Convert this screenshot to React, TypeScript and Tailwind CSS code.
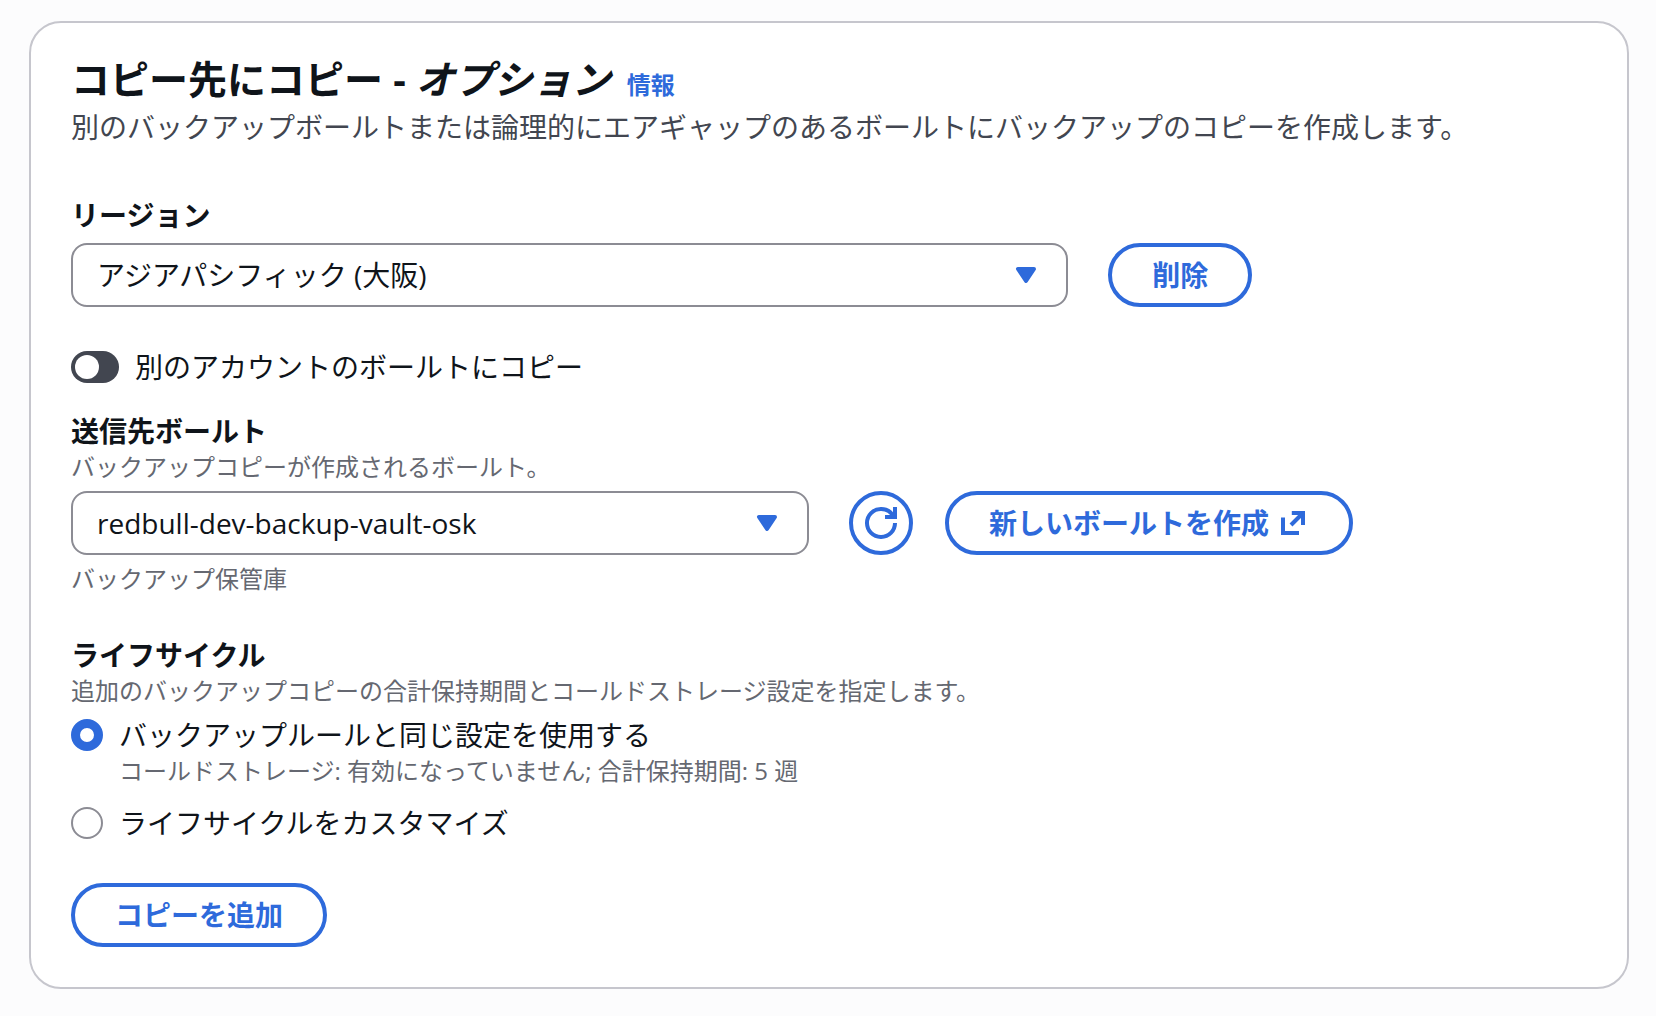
import { useId, useState, type ReactNode } from 'react';

const buttonClass =
  'flex h-16 shrink-0 items-center justify-center rounded-full border-4 border-[#2e6adb] bg-white font-bold whitespace-nowrap text-[#2e6adb]';

function Select({ id, options }: { id: string; options: string[] }) {
  return (
    <div className="relative">
      <select
        id={id}
        className="h-16 w-full appearance-none rounded-2xl border-2 border-[#8c8c94] bg-white pr-16 pl-6 text-[28px] text-[#0f141a]"
      >
        {options.map((option) => (
          <option key={option}>{option}</option>
        ))}
      </select>
      <svg
        className="pointer-events-none absolute top-4 right-[26px] h-8 w-8"
        viewBox="0 0 16 16"
        fill="#2e6adb"
        stroke="#2e6adb"
        strokeWidth="2"
        strokeLinejoin="round"
      >
        <path d="M4 5h8l-4 6-4-6z" />
      </svg>
    </div>
  );
}

function RefreshIcon() {
  return (
    <svg className="h-8 w-8" viewBox="0 0 16 16" fill="none" stroke="currentColor" strokeWidth="2">
      <path d="M10 5h5V0" />
      <path d="M15 8a6.957 6.957 0 0 1-7 7 6.957 6.957 0 0 1-7-7 6.957 6.957 0 0 1 7-7 6.87 6.87 0 0 1 6.3 4" />
    </svg>
  );
}

function ExternalIcon() {
  return (
    <svg className="h-8 w-8" viewBox="0 0 16 16" fill="none" stroke="currentColor" strokeWidth="2">
      <path d="M7.4 3H13v6" />
      <path d="m13 3-6 6" />
      <path d="M3 5.200V13h8" />
    </svg>
  );
}

function Label({ htmlFor, children }: { htmlFor: string; children: ReactNode }) {
  return (
    <label htmlFor={htmlFor} className="block w-fit leading-10 font-bold">
      {children}
    </label>
  );
}

function Hint({ children }: { children: ReactNode }) {
  return <p className="text-2xl leading-8 text-[#656871]">{children}</p>;
}

type RadioProps = {
  name: string;
  label: string;
  description?: string;
  checked: boolean;
  onChange: () => void;
};

function Radio({ name, label, description, checked, onChange }: RadioProps) {
  const id = useId();
  return (
    <div className="flex gap-4">
      <input
        id={id}
        type="radio"
        name={name}
        checked={checked}
        onChange={onChange}
        className="mt-1 h-8 w-8 shrink-0 appearance-none rounded-full border-2 border-[#8c8c94] bg-white checked:border-[9px] checked:border-[#2e6adb]"
      />
      <div>
        <label htmlFor={id} className="block leading-10">
          {label}
        </label>
        {description && <Hint>{description}</Hint>}
      </div>
    </div>
  );
}

export default function App() {
  const [crossAccount, setCrossAccount] = useState(false);
  const [lifecycle, setLifecycle] = useState('same');

  return (
    <main className="min-h-screen bg-[#fcfcfd] pt-[21px] pr-[27px] pb-[27px] pl-[29px] font-['Open_Sans','Noto_Sans_CJK_JP',sans-serif] text-[28px] text-[#0f141a]">
      <section className="rounded-[32px] border-2 border-[#c6c6cd] bg-white px-10 pt-8 pb-10">
        <header>
          <div className="flex items-baseline gap-4">
            <h2 className="text-[39px] leading-12 font-bold">
              コピー先にコピー - <em>オプション</em>
            </h2>
            <a href="#info" className="text-2xl leading-8 font-bold text-[#2e6adb]">
              情報
            </a>
          </div>
          <p className="mt-1 leading-10 text-[#424650]">
            別のバックアップボールトまたは論理的にエアギャップのあるボールトにバックアップのコピーを作成します。
          </p>
        </header>

        <div className="mt-12">
          <Label htmlFor="region">リージョン</Label>
          <div className="mt-2 grid grid-cols-12 gap-10">
            <div className="col-span-8">
              <Select id="region" options={['アジアパシフィック (大阪)']} />
            </div>
            <div className="col-span-4">
              <button type="button" className={`${buttonClass} px-10`}>
                削除
              </button>
            </div>
          </div>
        </div>

        <div className="mt-10 flex items-center gap-4">
          <input
            id="cross-account"
            type="checkbox"
            role="switch"
            checked={crossAccount}
            onChange={(e) => setCrossAccount(e.target.checked)}
            className="flex h-8 w-12 shrink-0 appearance-none items-center rounded-full bg-[#424650] px-1 before:h-6 before:w-6 before:rounded-full before:bg-white checked:justify-end checked:bg-[#2e6adb]"
          />
          <label htmlFor="cross-account" className="leading-10">
            別のアカウントのボールトにコピー
          </label>
        </div>

        <div className="mt-6">
          <Label htmlFor="vault">送信先ボールト</Label>
          <Hint>バックアップコピーが作成されるボールト。</Hint>
          <div className="mt-2 grid grid-cols-2 gap-10">
            <Select id="vault" options={['redbull-dev-backup-vault-osk']} />
            <div className="flex gap-8">
              <button type="button" aria-label="更新" className={`${buttonClass} w-16`}>
                <RefreshIcon />
              </button>
              <button type="button" className={`${buttonClass} gap-2 px-10`}>
                新しいボールトを作成
                <ExternalIcon />
              </button>
            </div>
          </div>
          <div className="mt-2">
            <Hint>バックアップ保管庫</Hint>
          </div>
        </div>

        <fieldset className="mt-10">
          <legend className="leading-10 font-bold">ライフサイクル</legend>
          <Hint>追加のバックアップコピーの合計保持期間とコールドストレージ設定を指定します。</Hint>
          <div className="mt-2 flex flex-col gap-4">
            <Radio
              name="lifecycle"
              label="バックアップルールと同じ設定を使用する"
              description="コールドストレージ: 有効になっていません; 合計保持期間: 5 週"
              checked={lifecycle === 'same'}
              onChange={() => setLifecycle('same')}
            />
            <Radio
              name="lifecycle"
              label="ライフサイクルをカスタマイズ"
              checked={lifecycle === 'custom'}
              onChange={() => setLifecycle('custom')}
            />
          </div>
        </fieldset>

        <button type="button" className={`${buttonClass} mt-10 px-10`}>
          コピーを追加
        </button>
      </section>
    </main>
  );
}
